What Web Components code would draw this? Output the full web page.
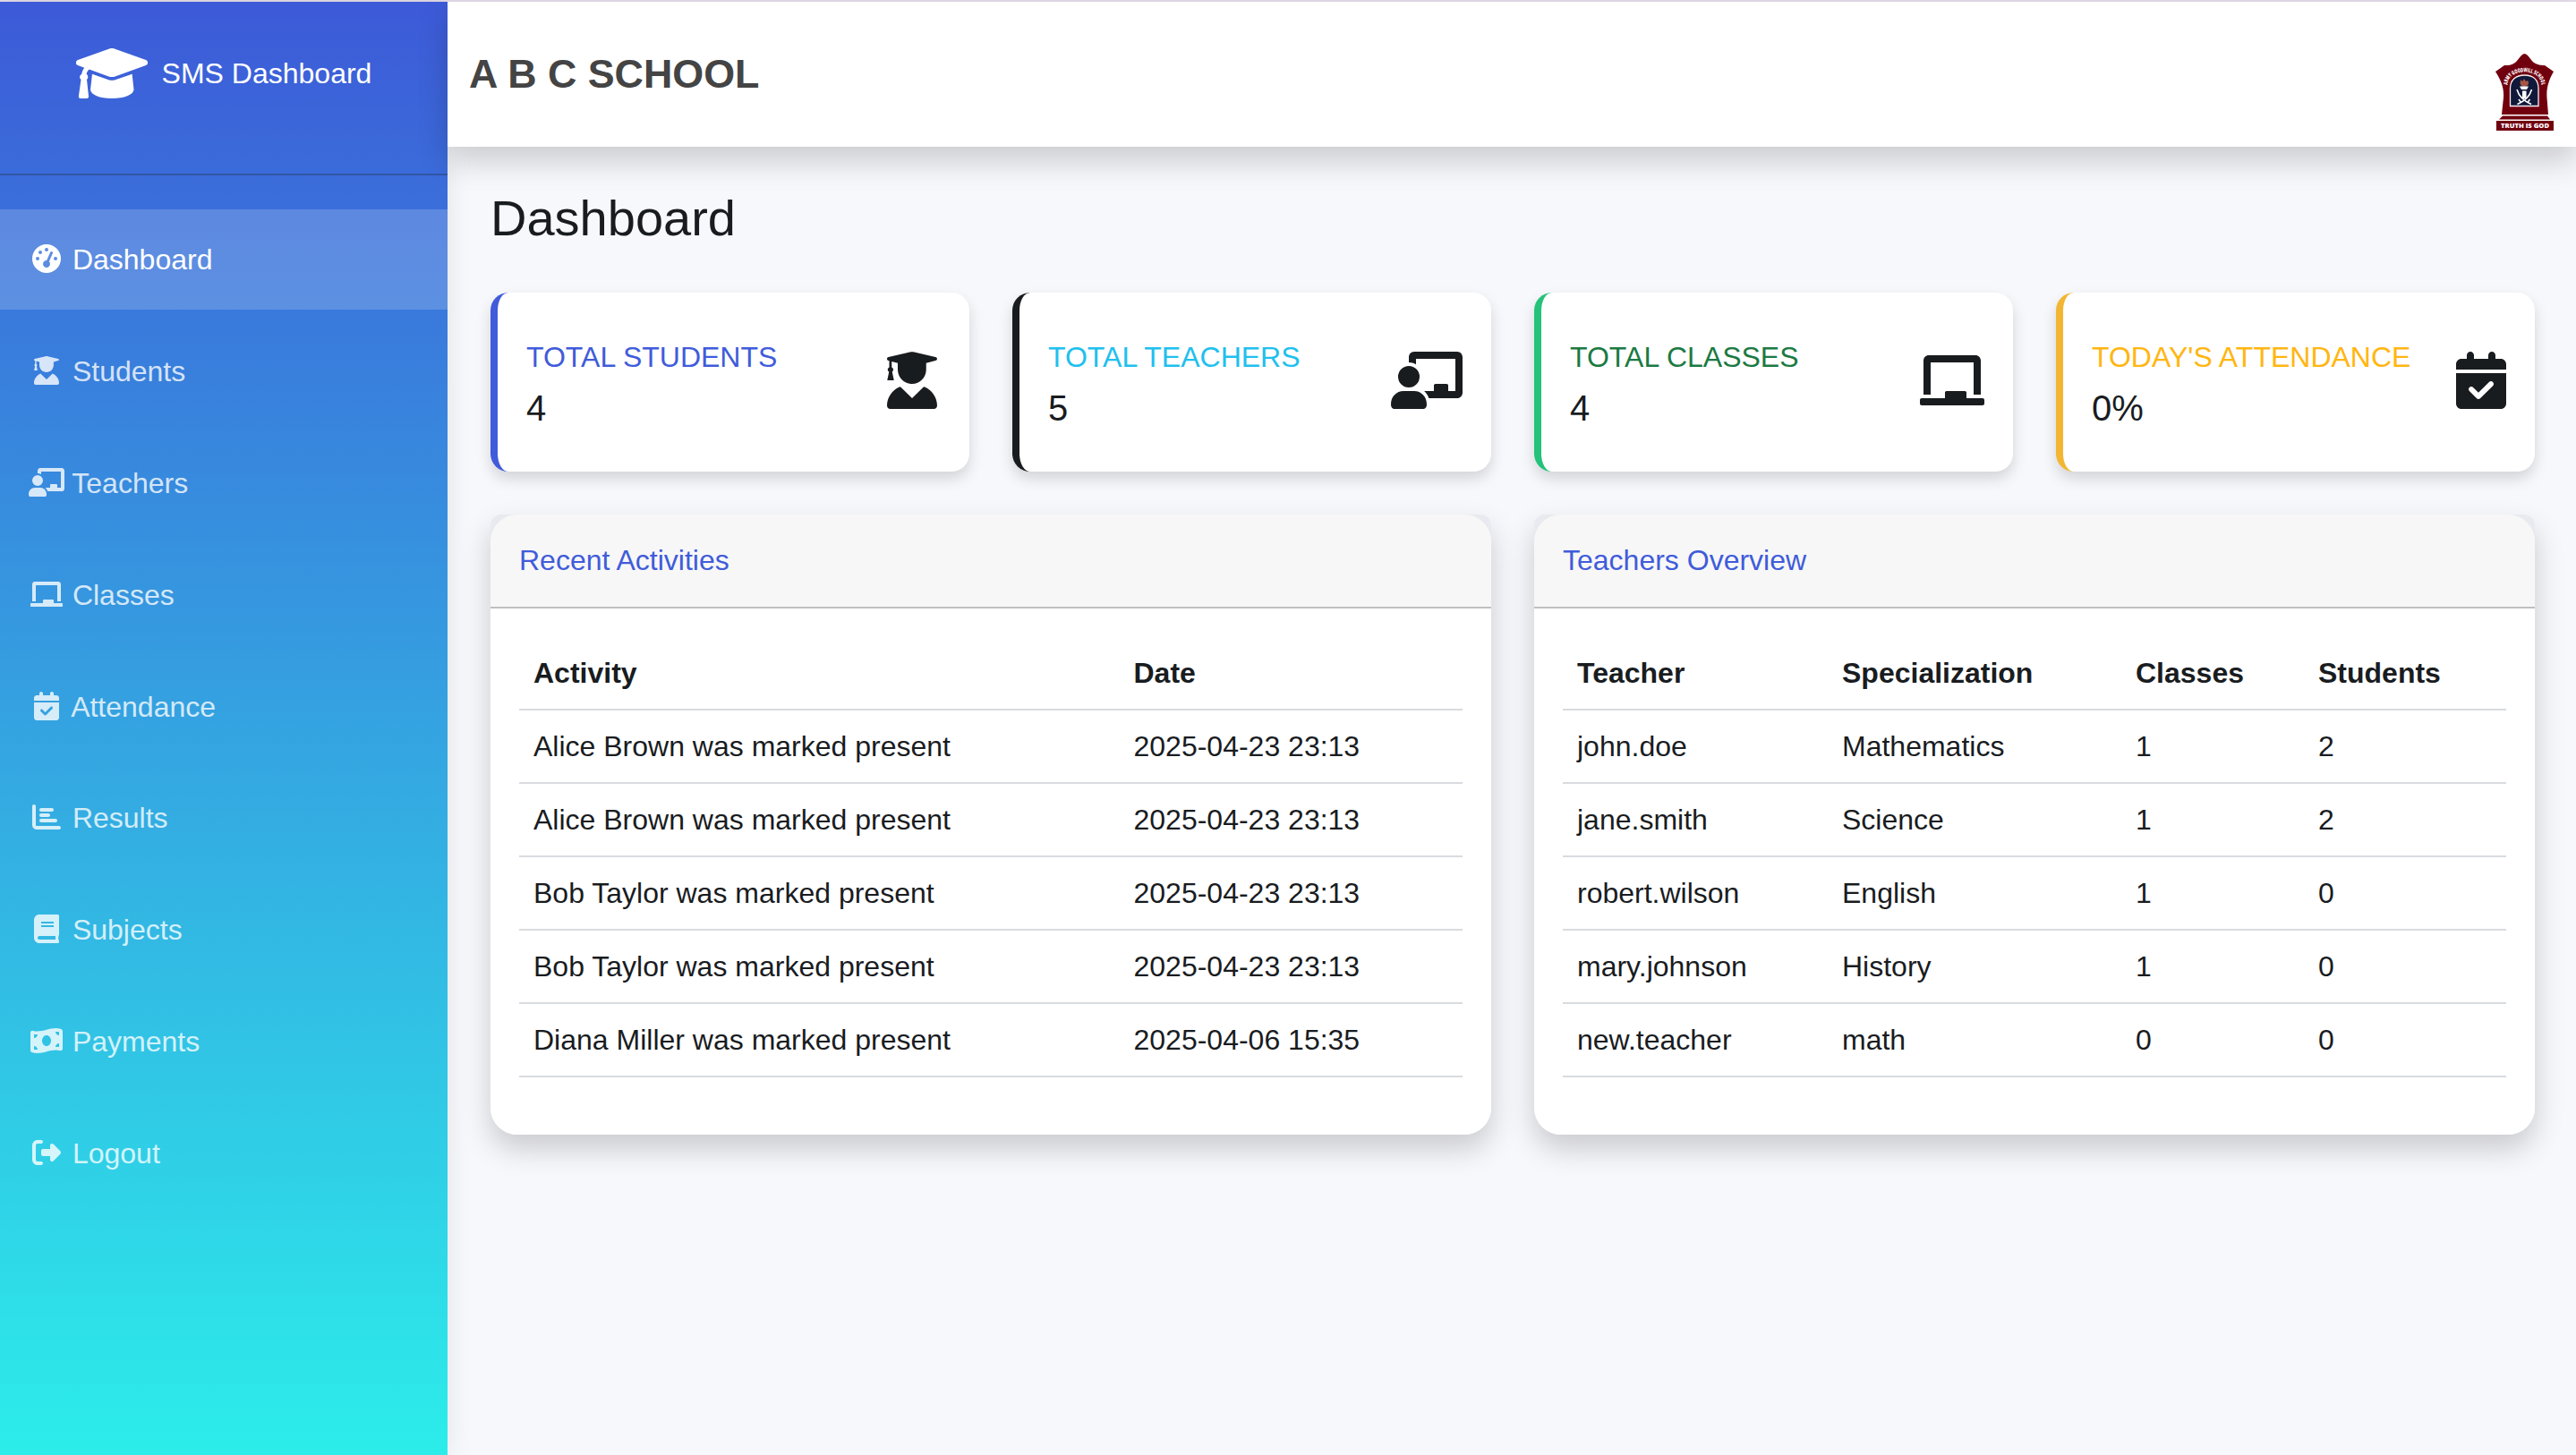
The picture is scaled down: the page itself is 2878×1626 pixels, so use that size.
<!DOCTYPE html>
<html lang="en">
<head>
<meta charset="utf-8">
<title>SMS Dashboard</title>
<style>
  html, body { margin: 0; height: 100%; }
  body {
    font-family: "Liberation Sans", Arial, sans-serif;
    font-size: 32px; line-height: 1.5; color: #191c1f;
    background: #f7f8fc; overflow: hidden;
  }
</style>
</head>
<body>
<sms-app>
  <sms-sidebar slot="sidebar">
    <sms-nav-item icon="gauge" active>Dashboard</sms-nav-item>
    <sms-nav-item icon="graduate">Students</sms-nav-item>
    <sms-nav-item icon="teacher">Teachers</sms-nav-item>
    <sms-nav-item icon="board">Classes</sms-nav-item>
    <sms-nav-item icon="calendar">Attendance</sms-nav-item>
    <sms-nav-item icon="chart">Results</sms-nav-item>
    <sms-nav-item icon="book">Subjects</sms-nav-item>
    <sms-nav-item icon="money">Payments</sms-nav-item>
    <sms-nav-item icon="logout">Logout</sms-nav-item>
  </sms-sidebar>
  <sms-topbar slot="topbar">A B C SCHOOL</sms-topbar>
  <sms-heading>Dashboard</sms-heading>
  <sms-row columns="4">
    <sms-stat icon="graduate" label="TOTAL STUDENTS" value="4" style="--edge:#405cda;--label:#405cda"></sms-stat>
    <sms-stat icon="teacher" label="TOTAL TEACHERS" value="5" style="--edge:#191c1f;--label:#20c0ee"></sms-stat>
    <sms-stat icon="board" label="TOTAL CLASSES" value="4" style="--edge:#24c27a;--label:#1b7a43"></sms-stat>
    <sms-stat icon="calendar" label="TODAY'S ATTENDANCE" value="0%" style="--edge:#f2b633;--label:#ffb612"></sms-stat>
  </sms-row>
  <sms-row columns="2">
    <sms-panel heading="Recent Activities"><sms-table id="activities"></sms-table></sms-panel>
    <sms-panel heading="Teachers Overview"><sms-table id="teachers"></sms-table></sms-panel>
  </sms-row>
</sms-app>

<script>
const ICONS = {
  gauge: ['0 0 512 512', 'M0 256a256 256 0 1 1 512 0A256 256 0 1 1 0 256zM288 96a32 32 0 1 0 -64 0 32 32 0 1 0 64 0zM256 416c35.3 0 64-28.7 64-64c0-17.4-6.9-33.1-18.1-44.6L366 161.7c5.3-12.1-.2-26.3-12.3-31.6s-26.3 .2-31.6 12.3L257.9 288c-.6 0-1.3 0-1.9 0c-35.3 0-64 28.7-64 64s28.7 64 64 64zM176 144a32 32 0 1 0 -64 0 32 32 0 1 0 64 0zM96 288a32 32 0 1 0 0-64 32 32 0 1 0 0 64zm352-32a32 32 0 1 0 -64 0 32 32 0 1 0 64 0z'],
  graduate: ['-32 0 512 512', 'M204 4c13-4 27-4 40 0L432 47c21 5 21 27 0 33L350 102V160c0 70.700-56 128-126 128S96 230.700 96 160V102L42 88V140c9 4 14 11 14 20 0 8-4 15-10 20L62 256H2L18 180c-7-5-12-12-12-20 0-9 6-16 14-20V82L14 80C-5 74-5 53 14 47zM110 315c6-3 10-2 14 3L224 416L324 318c4-5 8-6 14-3C403 345 448 410 448 480c0 20-12 32-30 32H30c-18 0-30-12-30-32C0 410 45 345 110 315z'],
  teacher: ['0 0 640 512', 'M160 50c0-28 21-50 48-50H592c27 0 48 22 48 50V366c0 28-21 50-48 50H339c-8-25-22-46-42-64H384V302c0-8 6-14 14-14H498c8 0 14 6 14 14v50h64V64H224v49C205 102 183 96 160 96zm0 78a96 96 0 1 1 0 192 96 96 0 1 1 0-192zM112 352h96c62 0 112 50 112 118c0 30-14 42-34 42H34C14 512 0 500 0 470c0-68 50-118 112-118z'],
  board: ['0 0 576 512', 'M80 32C53 32 32 53 32 80V384H96V96H480V384h64V80c0-27-21-48-48-48zM224 366v50H16c-9 0-16 7-16 16v32c0 9 7 16 16 16H560c9 0 16-7 16-16v-32c0-9-7-16-16-16H416V366c0-8-6-14-14-14H238c-8 0-14 6-14 14z'],
  calendar: ['0 0 448 512', 'M128 0c17.700 0 32 14.300 32 32V64H288V32c0-17.700 14.300-32 32-32s32 14.300 32 32V64h48c26.500 0 48 21.500 48 48v48H0V112C0 85.500 21.500 64 48 64H96V32c0-17.700 14.300-32 32-32zM0 192H448V464c0 26.500-21.500 48-48 48H48c-26.500 0-48-21.500-48-48V192zM329 305c9.400-9.400 9.400-24.600 0-33.900s-24.600-9.400-33.900 0L200 366l-47-47c-9.400-9.400-24.600-9.400-33.900 0s-9.400 24.600 0 33.900l64 64c9.400 9.400 24.600 9.400 33.900 0z'],
  chart: ['0 0 512 512', 'M32 32c17.700 0 32 14.300 32 32V400c0 8.800 7.200 16 16 16H480c17.700 0 32 14.300 32 32s-14.300 32-32 32H80c-44.200 0-80-35.800-80-80V64C0 46.300 14.300 32 32 32zm96 96c0-17.700 14.300-32 32-32H352c17.700 0 32 14.300 32 32s-14.300 32-32 32H160c-17.700 0-32-14.300-32-32zm32 64H288c17.700 0 32 14.300 32 32s-14.300 32-32 32H160c-17.700 0-32-14.300-32-32s14.300-32 32-32zm0 96H416c17.700 0 32 14.300 32 32s-14.300 32-32 32H160c-17.700 0-32-14.300-32-32s14.300-32 32-32z'],
  book: ['0 0 448 512', 'M448 360V24c0-13.300-10.700-24-24-24H96C43 0 0 43 0 96v320c0 53 43 96 96 96h328c13.300 0 24-10.700 24-24v-16c0-7.500-3.500-14.300-8.900-18.700-4.200-15.400-4.200-59.300 0-74.700 5.400-4.300 8.900-11.100 8.900-18.600zM128 128h224v32H128zM128 192h224v32H128zM384 448H96c-17.700 0-32-14.300-32-32 0-17.600 14.400-32 32-32h288z'],
  money: ['0 0 576 512', 'M0 112.500V422.300c0 18 10.100 35 27 41.300c87 32.500 174 10.300 261-11.900c79.800-20.300 159.600-40.700 239.300-18.900c23 6.300 48.700-9.500 48.700-33.400V89.700c0-18-10.100-35-27-41.300C462 15.900 375 38.100 288 60.300C208.200 80.600 128.400 100.900 48.700 79.100C25.600 72.800 0 88.600 0 112.500zM288 352c-44.200 0-80-43-80-96s35.800-96 80-96s80 43 80 96s-35.800 96-80 96zM64 352c35.300 0 64 28.700 64 64H64V352zm64-208c0 35.300-28.700 64-64 64V144h64zM512 304v64H448c0-35.300 28.700-64 64-64zM448 96h64v64c-35.300 0-64-28.700-64-64z'],
  logout: ['0 0 512 512', 'M377.900 105.900L500.700 228.700c7.200 7.200 11.300 17.100 11.300 27.300s-4.100 20.100-11.300 27.300L377.900 406.100c-6.400 6.400-15 9.900-24 9.900c-18.700 0-33.900-15.200-33.900-33.900V320H192c-17.700 0-32-14.300-32-32v-64c0-17.700 14.300-32 32-32h128v-62.100c0-18.700 15.200-33.900 33.900-33.900c9 0 17.600 3.600 24 9.900zM160 96H96c-17.700 0-32 14.300-32 32v256c0 17.700 14.300 32 32 32h64c17.700 0 32 14.300 32 32s-14.300 32-32 32H96c-53 0-96-43-96-96V128C0 75 43 32 96 32h64c17.700 0 32 14.300 32 32s-14.300 32-32 32z'],
  cap: ['0 0 640 512', 'M297 36c15-5 31-5 46 0L624 135c22 9 22 41 0 49L343 285c-15 5-31 5-46 0L117 220C103 232 96 245 93 262C102 268 106 278 106 288C106 298 102 306 96 311L112 460C113 473 107 480 97 480H38C28 480 22 473 23 460L44 311C37 306 33 298 33 288C33 277 39 268 49 263C53 240 62 221 74 205L16 184C-6 176-6 144 16 135zM144 262L297 315C312 320 328 320 343 315L501 262L516 402C512 448 430 480 320 480S132 448 128 402z']
};

class Base extends HTMLElement {
  connectedCallback() {
    if (!this.shadowRoot) this.attachShadow({ mode: 'open' }).innerHTML = this.view();
  }
}
const define = (name, view) => customElements.define(name, class extends Base { view() { return view(this); } });

define('sms-icon', el => {
  const [box, path] = ICONS[el.getAttribute('name')];
  const [, , w, h] = box.split(' ').map(Number);
  return `<style>
    :host { display: inline-block; text-align: center; line-height: 0; }
    svg { display: inline-block; height: 1em; width: ${w / h}em; fill: currentColor; overflow: visible; }
  </style><svg viewBox="${box}"><path fill-rule="${['gauge','book','money','calendar'].includes(el.getAttribute('name')) ? 'evenodd' : 'nonzero'}" d="${path}"/></svg>`;
});

define('sms-app', () => `<style>
    :host { display: flex; flex-direction: column; height: 100vh; box-sizing: border-box; border-top: 2px solid #e3dcea; }
    .body { display: flex; flex: 1; min-height: 0; }
    .main { flex: 1; display: flex; flex-direction: column; min-width: 0; }
    main { display: flex; flex-direction: column; gap: 48px; padding: 46px 46px 0 48px; }
  </style>
  <div class="body">
    <slot name="sidebar"></slot>
    <div class="main"><slot name="topbar"></slot><main><slot></slot></main></div>
  </div>`);

define('sms-sidebar', () => `<style>
    :host { display: flex; flex-direction: column; flex: none; width: 500px; color: #fff;
      background: linear-gradient(180deg, #3d5ad8 0%, #2cedea 100%); box-shadow: 0 0 28px rgba(0,0,0,.09); }
    .brand { height: 192px; box-sizing: border-box; padding-top: 48px; display: flex; justify-content: center; align-items: flex-start; gap: 16px; white-space: nowrap; }
    .brand sms-icon { font-size: 64px; }
    .brand span { line-height: 48px; padding-top: 8px; }
    hr { margin: 0 0 38.4px; border: 0; height: 2px; background: rgba(33,37,41,.3); flex: none; }
    nav { display: flex; flex-direction: column; gap: 12.8px; }
  </style>
  <div class="brand"><sms-icon name="cap"></sms-icon><span>SMS Dashboard</span></div>
  <hr>
  <nav><slot></slot></nav>`);

define('sms-nav-item', el => `<style>
    :host { display: block; height: 48px; padding: 32px; line-height: 48px; color: rgba(255,255,255,.8); white-space: nowrap; }
    :host([active]) { color: #fff; background: rgba(255,255,255,.18); }
    sms-icon { width: 40px; vertical-align: -4px; }
  </style><sms-icon name="${el.getAttribute('icon')}"></sms-icon> <slot></slot>`);

define('sms-topbar', () => `<style>
    :host { display: flex; justify-content: space-between; height: 162px; flex: none; background: #fff; position: relative; z-index: 1;
      box-shadow: 0 16px 32px rgba(0,0,0,.18); box-sizing: border-box; padding: 0 23px 0 24px; }
    h1 { margin: 46.600px 0 0; font-size: 44.8px; line-height: 67.2px; font-weight: 700; color: #444; white-space: nowrap; }
    sms-crest { margin-top: 57px; }
  </style><h1><slot></slot></h1><sms-crest></sms-crest>`);

define('sms-crest', () => `<style>:host { display: block; width: 68px; height: 90px; } svg { display: block; }</style>
  <svg width="68" height="90" viewBox="0 0 68 90">
    <path fill="#71000f" d="M33.500 1C38 2 40 8 44 11C49 14 53 14 56 14L66 21C59 33 58 42 58.500 50L60 69H8L10 50C10.500 42 9 33 1 21L11 14C15 14 19 14 23 11C27 8 29 2 33.500 1z"/>
    <path fill="#71000f" d="M9 70.500H59L62 74.500H5z M2 76H66V87H2z"/>
    <path fill="#11193a" stroke="#f7eef0" stroke-width="1.300" d="M17.500 59.500V40C17.500 30 24 25 33.500 25S49 30 49 40V59.500z"/>
    <path fill="#a75542" d="M33 38C28 37 28 33 29.500 30L31 32L33 29L35 32L37 31C39 34 38 37 33 38z"/>
    <path fill="#fff" d="M28 37.500H38L36 41H30z M31 42.500H35.500V51H31z"/>
    <path fill="none" stroke="#fff" stroke-width="1.600" d="M25 41C27 48 33 54 41 57.500M41.500 41C39.500 48 33.500 54 25.500 57.500M27 52L30 56M39.500 52L36.500 56"/>
    <path id="arc" fill="none" d="M14.500 36C15 16.500 51.500 16.500 52.500 36"/>
    <text font-family="Open Sans, sans-serif" font-size="6.400" font-weight="800" fill="#fff"><textPath href="#arc" textLength="53" lengthAdjust="spacingAndGlyphs">ARMY GOODWILL SCHOOL</textPath></text>
    <text x="34" y="84" text-anchor="middle" textLength="54" lengthAdjust="spacingAndGlyphs" font-family="Open Sans, sans-serif" font-size="7" font-weight="800" fill="#fff">TRUTH IS GOD</text>
  </svg>`);

define('sms-heading', () => `<style>
    :host { display: block; }
    h2 { margin: 0; font-size: 56px; line-height: 68px; font-weight: 400; height: 69px; }
  </style><h2><slot></slot></h2>`);

define('sms-row', el => `<style>
    :host { display: grid; grid-template-columns: repeat(${el.getAttribute('columns')}, 1fr); gap: 48px; }
  </style><slot></slot>`);

define('sms-stat', el => `<style>
    :host { display: flex; justify-content: space-between; align-items: center; height: 200px; box-sizing: border-box; background: #fff;
      border-left: 8px solid var(--edge); border-radius: 20px; padding: 0 32px; box-shadow: 0 8px 16px rgba(0,0,0,.145); }
    .text { display: flex; flex-direction: column; gap: 13.600px; padding-top: 5.400px; white-space: nowrap; }
    .label { color: var(--label); line-height: 38.4px; }
    .value { font-size: 40px; line-height: 48px; }
    sms-icon { font-size: 64px; margin-bottom: 4px; }
  </style>
  <div class="text"><div class="label">${el.getAttribute('label')}</div><div class="value">${el.getAttribute('value')}</div></div>
  <sms-icon name="${el.getAttribute('icon')}"></sms-icon>`);

define('sms-panel', el => `<style>
    :host { display: block; border-radius: 12px 12px 30px 30px; background: linear-gradient(#e9eaef 0 60px, transparent 60px); box-shadow: 0 16px 32px rgba(0,0,0,.185); }
    header { height: 71px; padding: 32px 32px 0; color: #405cda; line-height: 38.4px; background: #f7f7f7;
      border-bottom: 2px solid #bfbfbf; border-radius: 30px 30px 0 0; }
    section { padding: 32px 32px 64px; background: #fff; border-radius: 0 0 30px 30px; }
  </style><header>${el.getAttribute('heading')}</header><section><slot></slot></section>`);

const TABLES = {
  activities: { widths: [670.5, 383.5], rows: [
    ['Activity', 'Date'],
    ['Alice Brown was marked present', '2025-04-23 23:13'],
    ['Alice Brown was marked present', '2025-04-23 23:13'],
    ['Bob Taylor was marked present', '2025-04-23 23:13'],
    ['Bob Taylor was marked present', '2025-04-23 23:13'],
    ['Diana Miller was marked present', '2025-04-06 15:35']] },
  teachers: { widths: [296, 328, 204, 226], rows: [
    ['Teacher', 'Specialization', 'Classes', 'Students'],
    ['john.doe', 'Mathematics', '1', '2'],
    ['jane.smith', 'Science', '1', '2'],
    ['robert.wilson', 'English', '1', '0'],
    ['mary.johnson', 'History', '1', '0'],
    ['new.teacher', 'math', '0', '0']] }
};
define('sms-table', el => {
  const { widths, rows } = TABLES[el.id];
  const row = (cells, tag) => `<tr>${cells.map(c => `<${tag}>${c}</${tag}>`).join('')}</tr>`;
  return `<style>
    :host { display: block; }
    table { width: 100%; table-layout: fixed; border-spacing: 0; border-collapse: separate; font: inherit; line-height: 48px; }
    th, td { padding: 16px; text-align: left; border-bottom: 2px solid #d8dbdf; white-space: nowrap; }
  </style>
  <table><colgroup>${widths.map(w => `<col style="width:${w}px">`).join('')}</colgroup>
    <thead>${row(rows[0], 'th')}</thead><tbody>${rows.slice(1).map(r => row(r, 'td')).join('')}</tbody></table>`;
});
</script>
</body>
</html>
